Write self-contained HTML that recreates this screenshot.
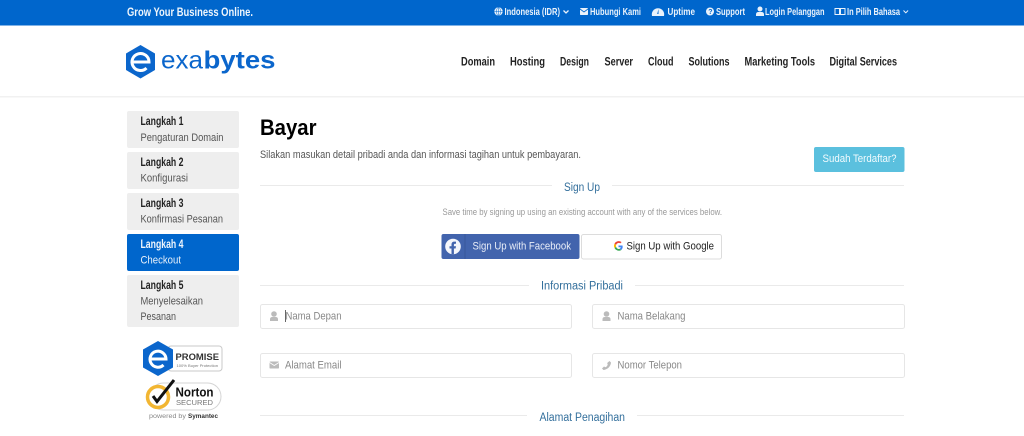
<!DOCTYPE html>
<html lang="id">
<head>
<meta charset="utf-8">
<title>Bayar - Exabytes</title>
<style>
html,body{margin:0;padding:0;background:#fff;width:1024px;height:436px;overflow:hidden}
svg{display:block}
text{font-family:"Liberation Sans",sans-serif}
.top{fill:#eaf2fb;font-size:10px;font-weight:bold}
.nav{fill:#222;font-size:11.5px;font-weight:bold}
.st{fill:#222;font-size:11.5px;font-weight:bold}
.sb{fill:#555;font-size:11px}
.dv{fill:#336f9c;font-size:11.5px}
.ph{fill:#888;font-size:11px}
</style>
</head>
<body>
<svg xmlns="http://www.w3.org/2000/svg" width="1024" height="436" viewBox="0 0 1024 436">
<rect width="1024" height="436" fill="#fff"/>
<!-- top bar -->
<rect width="1024" height="25.5" fill="#0066cc"/>
<text x="127" y="16" fill="#eef5fc" font-size="11.5px" font-weight="bold" textLength="126" lengthAdjust="spacingAndGlyphs">Grow Your Business Online.</text>
<g fill="#eaf2fb">
<circle cx="498.5" cy="11.5" r="4.200"/>
<path d="M494.300 11.500h8.400M498.500 7.300v8.400" fill="none" stroke="#0066cc" stroke-width=".5"/>
<ellipse cx="498.500" cy="11.500" rx="2" ry="4.200" fill="none" stroke="#0066cc" stroke-width=".5"/>
<path d="M563.500 10.500l2.500 2.500 2.500-2.500" fill="none" stroke="#eaf2fb" stroke-width="1.300"/>
<rect x="580" y="8" width="8" height="7" rx=".8"/>
<path d="M580 9l4 3 4-3" fill="none" stroke="#0066cc" stroke-width=".8"/>
<path d="M652 16a6.200 6.200 0 1 1 12 0z"/>
<path d="M658.500 9l-1.300 5h1.300z" fill="#0066cc"/>
<circle cx="710" cy="11.500" r="4"/>
<text x="708.200" y="14.200" font-size="7px" font-weight="bold" style="fill:#0066cc">?</text>
<circle cx="760" cy="9" r="2.500"/>
<path d="M756 16v-1.500q0-2.500 2.500-2.500h3q2.500 0 2.500 2.500V16z"/>
<rect x="835" y="8.500" width="4.500" height="6" fill="none" stroke="#eaf2fb" stroke-width="1"/>
<rect x="840.500" y="8.500" width="4.500" height="6" fill="none" stroke="#eaf2fb" stroke-width="1"/>
<path d="M903.500 10.500l2.300 2.300 2.300-2.300" fill="none" stroke="#eaf2fb" stroke-width="1"/>
</g>
<text class="top" x="504.500" y="15" textLength="55.500" lengthAdjust="spacingAndGlyphs">Indonesia (IDR)</text>
<text class="top" x="590" y="15" textLength="51" lengthAdjust="spacingAndGlyphs">Hubungi Kami</text>
<text class="top" x="667.500" y="15" textLength="27.500" lengthAdjust="spacingAndGlyphs">Uptime</text>
<text class="top" x="716" y="15" textLength="29" lengthAdjust="spacingAndGlyphs">Support</text>
<text class="top" x="765" y="15" textLength="59.500" lengthAdjust="spacingAndGlyphs">Login Pelanggan</text>
<text class="top" x="847" y="15" textLength="53" lengthAdjust="spacingAndGlyphs">In Pilih Bahasa</text>
<!-- header -->
<path d="M140.500 45L155 53.500V70L140.500 78.500L126 70V53.500z" fill="#0b66cc"/>
<path d="M132.500 62H149A8.500 8.500 0 1 0 146.500 68" fill="none" stroke="#fff" stroke-width="3"/>
<text x="161" y="68.500" fill="#0b66cc" font-size="25px" textLength="42" lengthAdjust="spacingAndGlyphs">exa</text>
<text x="203.500" y="68.500" fill="#0b66cc" font-size="25px" font-weight="bold" textLength="72" lengthAdjust="spacingAndGlyphs">bytes</text>
<text class="nav" x="461" y="65.500" textLength="34" lengthAdjust="spacingAndGlyphs">Domain</text>
<text class="nav" x="510" y="65.500" textLength="35" lengthAdjust="spacingAndGlyphs">Hosting</text>
<text class="nav" x="560" y="65.500" textLength="29" lengthAdjust="spacingAndGlyphs">Design</text>
<text class="nav" x="604.500" y="65.500" textLength="28.500" lengthAdjust="spacingAndGlyphs">Server</text>
<text class="nav" x="648" y="65.500" textLength="25.500" lengthAdjust="spacingAndGlyphs">Cloud</text>
<text class="nav" x="688.500" y="65.500" textLength="41" lengthAdjust="spacingAndGlyphs">Solutions</text>
<text class="nav" x="744.500" y="65.500" textLength="70.500" lengthAdjust="spacingAndGlyphs">Marketing Tools</text>
<text class="nav" x="829.500" y="65.500" textLength="67.500" lengthAdjust="spacingAndGlyphs">Digital Services</text>
<rect y="96" width="1024" height="1.500" fill="#f1f1f1"/>
<!-- sidebar -->
<rect x="127" y="111" width="112" height="37" rx="2" fill="#eee"/>
<text class="st" x="140.500" y="125" textLength="43" lengthAdjust="spacingAndGlyphs">Langkah 1</text>
<text class="sb" x="140.500" y="141" textLength="83" lengthAdjust="spacingAndGlyphs">Pengaturan Domain</text>
<rect x="127" y="152" width="112" height="37" rx="2" fill="#eee"/>
<text class="st" x="140.500" y="166" textLength="43" lengthAdjust="spacingAndGlyphs">Langkah 2</text>
<text class="sb" x="140.500" y="181.500" textLength="47.500" lengthAdjust="spacingAndGlyphs">Konfigurasi</text>
<rect x="127" y="193" width="112" height="37" rx="2" fill="#eee"/>
<text class="st" x="140.500" y="207" textLength="43" lengthAdjust="spacingAndGlyphs">Langkah 3</text>
<text class="sb" x="140.500" y="222.500" textLength="82.500" lengthAdjust="spacingAndGlyphs">Konfirmasi Pesanan</text>
<rect x="127" y="234" width="112" height="37" rx="2" fill="#0066cc"/>
<text x="140.500" y="248" fill="#eef5fc" font-size="11.500px" font-weight="bold" textLength="43" lengthAdjust="spacingAndGlyphs">Langkah 4</text>
<text x="140.500" y="263.500" fill="#e6f0fa" font-size="11px" textLength="40.500" lengthAdjust="spacingAndGlyphs">Checkout</text>
<rect x="127" y="275" width="112" height="52" rx="2" fill="#eee"/>
<text class="st" x="140.500" y="289" textLength="43" lengthAdjust="spacingAndGlyphs">Langkah 5</text>
<text class="sb" x="140.500" y="304.500" textLength="62.500" lengthAdjust="spacingAndGlyphs">Menyelesaikan</text>
<text class="sb" x="140.500" y="320" textLength="35.500" lengthAdjust="spacingAndGlyphs">Pesanan</text>
<!-- badges -->
<rect x="168" y="346" width="54" height="25" rx="3" fill="#fff" stroke="#c9c9c9" stroke-width="1"/>
<path d="M158 341L173 349.500V367.500L158 376L143 367.500V349.500z" fill="#0b66cc"/>
<path d="M150 359H166A8 8 0 1 0 163.500 365" fill="none" stroke="#fff" stroke-width="3"/>
<text x="175.500" y="360" fill="#333" font-size="9px" font-weight="bold" textLength="43.500" lengthAdjust="spacingAndGlyphs">PROMISE</text>
<text x="176.500" y="367" fill="#777" font-size="4px" textLength="41.500" lengthAdjust="spacingAndGlyphs">100% Buyer Protection</text>
<rect x="150" y="383" width="71" height="27" rx="13.500" fill="#fff" stroke="#d4d4d4" stroke-width="1"/>
<circle cx="158" cy="397" r="10.500" fill="#fff" stroke="#f2b632" stroke-width="3.500"/>
<path d="M153 396l4 5.500L174 380" fill="none" stroke="#111" stroke-width="3"/>
<text x="175.500" y="396.500" fill="#111" font-size="12.500px" font-weight="bold" textLength="38" lengthAdjust="spacingAndGlyphs">Norton</text>
<text x="176" y="405" fill="#777" font-size="7px" textLength="37" lengthAdjust="spacingAndGlyphs">SECURED</text>
<text x="149" y="418" fill="#888" font-size="6.500px" textLength="37" lengthAdjust="spacingAndGlyphs">powered by</text>
<text x="188" y="418" fill="#333" font-size="6.500px" font-weight="bold" textLength="30" lengthAdjust="spacingAndGlyphs">Symantec</text>
<!-- main -->
<text x="260" y="135" fill="#000" font-size="22px" font-weight="bold" textLength="56.500" lengthAdjust="spacingAndGlyphs">Bayar</text>
<text x="260" y="158" fill="#555" font-size="11px" textLength="321" lengthAdjust="spacingAndGlyphs">Silakan masukan detail pribadi anda dan informasi tagihan untuk pembayaran.</text>
<rect x="814" y="147" width="90.500" height="25" rx="2" fill="#5bc0de"/>
<text x="822.500" y="162" fill="#f2fbfe" font-size="11px" textLength="74" lengthAdjust="spacingAndGlyphs">Sudah Terdaftar?</text>
<g fill="#eaeaea">
<rect x="260" y="185" width="292" height="1"/>
<rect x="612" y="185" width="292" height="1"/>
<rect x="260" y="285" width="269" height="1"/>
<rect x="635" y="285" width="269" height="1"/>
<rect x="260" y="415" width="267" height="1"/>
<rect x="637" y="415" width="267" height="1"/>
</g>
<text class="dv" x="564" y="191" textLength="36" lengthAdjust="spacingAndGlyphs">Sign Up</text>
<text class="dv" x="541" y="289.500" textLength="82" lengthAdjust="spacingAndGlyphs">Informasi Pribadi</text>
<text class="dv" x="539.500" y="421" textLength="85.500" lengthAdjust="spacingAndGlyphs">Alamat Penagihan</text>
<text x="442.500" y="215" fill="#999" font-size="9px" textLength="279.500" lengthAdjust="spacingAndGlyphs">Save time by signing up using an existing account with any of the services below.</text>
<!-- social -->
<rect x="441.500" y="234" width="138" height="25" rx="2" fill="#4264ad"/>
<rect x="464.500" y="234" width="1" height="25" fill="#38589c"/>
<circle cx="453" cy="246.500" r="7.800" fill="#f4f6fb"/>
<path d="M451.500 254.300v-5.800h-2v-2.300h2v-1.800q0-2.800 2.800-2.800h1.700v2.200h-1.100q-1 0-1 1v1.400h2.100l-.4 2.300h-1.700v5.800z" fill="#4264ad"/>
<text x="472.500" y="249.500" fill="#e9eef8" font-size="11px" textLength="98.500" lengthAdjust="spacingAndGlyphs">Sign Up with Facebook</text>
<rect x="581.500" y="234.500" width="140" height="24.500" rx="2" fill="#fff" stroke="#dcdcdc" stroke-width="1"/>
<path d="M622.500 245.500h-4v1.800h2.300a2.800 2.800 0 0 1-1.100 1.500l1.500 1.300a4.700 4.700 0 0 0 1.300-4.600z" fill="#4285f4"/>
<path d="M614.500 248a4.800 4.800 0 0 0 6.700 2.100l-1.500-1.300a2.800 2.800 0 0 1-3.600-2z" fill="#34a853"/>
<path d="M614.500 243.700a4.800 4.800 0 0 0 0 4.300l1.600-1.200a2.800 2.800 0 0 1 0-1.900z" fill="#fbbc05"/>
<path d="M621.600 242.100a4.800 4.800 0 0 0-7.100 1.600l1.600 1.200a2.800 2.800 0 0 1 4.200-1.500z" fill="#ea4335"/>
<text x="626.500" y="249.500" fill="#222" font-size="11px" textLength="87.500" lengthAdjust="spacingAndGlyphs">Sign Up with Google</text>
<!-- inputs -->
<g fill="#fff" stroke="#e6e6e6" stroke-width="1">
<rect x="260.500" y="304.500" width="311" height="24" rx="2"/>
<rect x="592.500" y="304.500" width="312" height="24" rx="2"/>
<rect x="260.500" y="353.500" width="311" height="24" rx="2"/>
<rect x="592.500" y="353.500" width="312" height="24" rx="2"/>
</g>
<g fill="#bbb">
<circle cx="274" cy="314" r="2.800"/>
<path d="M270 321v-1.700q0-2.300 2.300-2.300h3.400q2.300 0 2.300 2.300V321z"/>
<circle cx="606.500" cy="314" r="2.800"/>
<path d="M602.500 321v-1.700q0-2.300 2.300-2.300h3.400q2.300 0 2.300 2.300V321z"/>
<rect x="269.500" y="361.500" width="9.500" height="7" rx=".8"/>
<path d="M269.500 362.500l4.750 3 4.750-3" fill="none" stroke="#fff" stroke-width=".8"/>
<path d="M609.500 361l1.500 1.500c-.3 4-3.500 7-7.500 7.500l-1.500-1.500 2-2 1.500.8c1-.6 1.800-1.500 2.200-2.600l-.5-1.700z"/>
</g>
<rect x="285" y="310" width="1" height="12" fill="#666"/>
<text class="ph" x="285.500" y="319.500" textLength="56" lengthAdjust="spacingAndGlyphs">Nama Depan</text>
<text class="ph" x="617.500" y="319.500" textLength="68" lengthAdjust="spacingAndGlyphs">Nama Belakang</text>
<text class="ph" x="285" y="368.500" textLength="56.500" lengthAdjust="spacingAndGlyphs">Alamat Email</text>
<text class="ph" x="617.500" y="368.500" textLength="64.500" lengthAdjust="spacingAndGlyphs">Nomor Telepon</text>
</svg>
</body>
</html>
